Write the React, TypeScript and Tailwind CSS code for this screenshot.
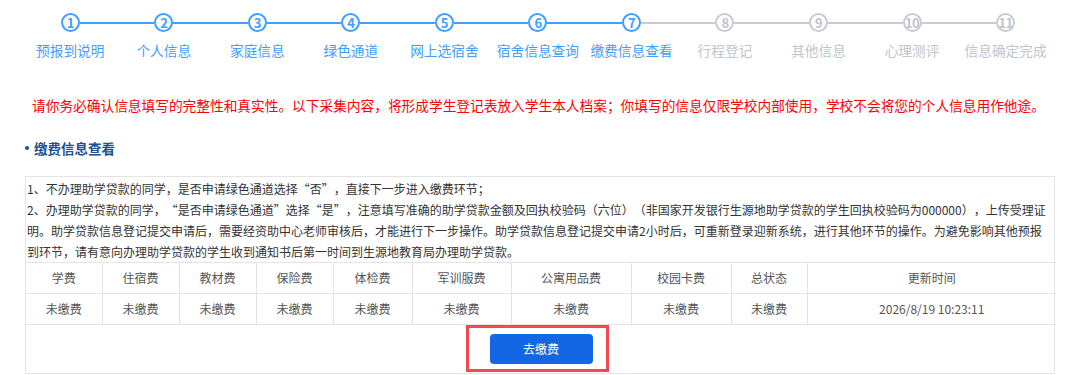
const steps = [
  "预报到说明",
  "个人信息",
  "家庭信息",
  "绿色通道",
  "网上选宿舍",
  "宿舍信息查询",
  "缴费信息查看",
  "行程登记",
  "其他信息",
  "心理测评",
  "信息确定完成",
];

const current = 7;

const heads = ["学费", "住宿费", "教材费", "保险费", "体检费", "军训服费", "公寓用品费", "校园卡费", "总状态", "更新时间"];
const widths = ["w-[76px]", "w-[77px]", "w-[77px]", "w-[77px]", "w-[79px]", "w-[99px]", "w-[120px]", "w-[100px]", "w-[76px]", "w-[249px]"];
const values = ["未缴费", "未缴费", "未缴费", "未缴费", "未缴费", "未缴费", "未缴费", "未缴费", "未缴费", "2026/8/19 10:23:11"];

// quote marks set in a full-width box, like the original page's font
function Open() {
  return <span className="inline-block w-[12px] text-right">“</span>;
}
function Close() {
  return <span className="inline-block w-[12px] text-left">”</span>;
}

function Step({ n, label }: { n: number; label: string }) {
  const done = n <= current;
  const leftOn = n <= current;
  const rightOn = n < current;
  return (
    <div className="flex w-[93.54px] shrink-0 flex-col items-center">
      <div className="flex h-[19px] w-full items-center">
        <div className={`h-[2px] flex-1 ${n === 1 ? "bg-transparent" : leftOn ? "bg-[#409eff]" : "bg-[#c8cbd1]"}`} />
        <div
          className={`flex h-[19px] w-[19px] items-center justify-center rounded-full border-2 bg-white text-[13px] font-bold leading-none tracking-[-0.6px] ${
            done ? "border-[#409eff] text-[#409eff]" : "border-[#c8cbd1] text-[#c0c4cc]"
          }`}
        >
          {n}
        </div>
        <div className={`h-[2px] flex-1 ${n === steps.length ? "bg-transparent" : rightOn ? "bg-[#409eff]" : "bg-[#c8cbd1]"}`} />
      </div>
      <div className={`mt-[8px] whitespace-nowrap text-[13.7px] leading-[20px] ${done ? "text-[#409eff]" : "text-[#c0c4cc]"}`}>
        {label}
      </div>
    </div>
  );
}

export default function App() {
  return (
    <div lang="zh-CN" className="h-[375px] w-[1080px] overflow-hidden bg-white font-['Noto_Sans_CJK_SC',sans-serif]">
      <div className="flex pl-[23.5px] pt-[13px]">
        {steps.map((s, i) => (
          <Step key={s} n={i + 1} label={s} />
        ))}
      </div>

      <p className="mt-[35px] pl-[32px] text-[13.7px] leading-[20px] whitespace-nowrap text-[#ff0000]">
        请你务必确认信息填写的完整性和真实性。以下采集内容，将形成学生登记表放入学生本人档案；你填写的信息仅限学校内部使用，学校不会将您的个人信息用作他途。
      </p>

      <div className="mt-[23px] flex items-center pl-[25px]">
        <span className="h-[4px] w-[4px] rounded-full bg-[#1d4f91]" />
        <h2 className="ml-[5px] text-[13.5px] font-bold leading-[20px] text-[#1d4f91]">缴费信息查看</h2>
      </div>

      <div className="ml-[25px] mt-[18px] w-[1030px] border border-[#e4e4e4]">
        <div className="px-[1px] pt-[1px] text-[12px] leading-[21px] text-[#333] whitespace-nowrap [text-spacing-trim:space-all]">
          <div>
            1、不办理助学贷款的同学，是否申请绿色通道选择<Open />否<Close />，直接下一步进入缴费环节；
          </div>
          <div>
            2、办理助学贷款的同学，<Open />是否申请绿色通道<Close />选择<Open />是<Close />
            ，注意填写准确的助学贷款金额及回执校验码（六位）（非国家开发银行生源地助学贷款的学生回执校验码为000000），上传受理证
          </div>
          <div>
            明。助学贷款信息登记提交申请后，需要经资助中心老师审核后，才能进行下一步操作。助学贷款信息登记提交申请2小时后，可重新登录迎新系统，进行其他环节的操作。为避免影响其他预报
          </div>
          <div>到环节，请有意向办理助学贷款的学生收到通知书后第一时间到生源地教育局办理助学贷款。</div>
        </div>

        <table className="w-full table-fixed border-collapse text-[12px] text-[#555]">
          <tbody>
            <tr>
              {heads.map((h, i) => (
                <td key={h} className={`${widths[i]} h-[31px] border-t border-[#e4e4e4] text-center ${i > 0 ? "border-l" : ""}`}>
                  {h}
                </td>
              ))}
            </tr>
            <tr>
              {values.map((v, i) => (
                <td key={i} className={`h-[31px] border-t border-[#e4e4e4] text-center ${i > 0 ? "border-l" : ""}`}>
                  {v}
                </td>
              ))}
            </tr>
            <tr>
              <td colSpan={10} className="h-[48px] border-t border-[#e4e4e4]">
                <div className="flex justify-center">
                  <div className="relative">
                    <button className="h-[30px] w-[103px] rounded-[4px] bg-[#1467e4] text-[12px] text-white">去缴费</button>
                    <div className="pointer-events-none absolute left-[-24px] top-[-9px] h-[47px] w-[143px] border-[3px] border-[#f24a52]" />
                  </div>
                </div>
              </td>
            </tr>
          </tbody>
        </table>
      </div>
    </div>
  );
}
